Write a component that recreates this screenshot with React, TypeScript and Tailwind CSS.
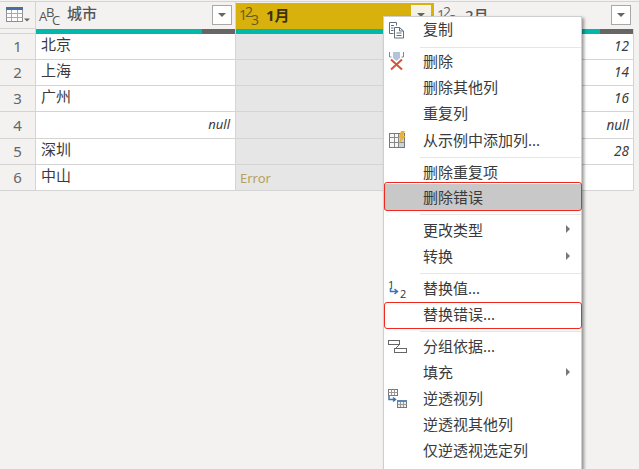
import React from "react";

const rows = [
  { n: 1, city: "北京", feb: "12", h: "h-[26px]" },
  { n: 2, city: "上海", feb: "14", h: "h-[26px]" },
  { n: 3, city: "广州", feb: "16", h: "h-[26px]" },
  { n: 4, city: "", feb: "null", h: "h-[27px]" },
  { n: 5, city: "深圳", feb: "28", h: "h-[26px]" },
  { n: 6, city: "中山", feb: "", h: "h-[26px]" },
];

function Caret() {
  return <span className="w-0 h-0 border-x-[4px] border-x-transparent border-t-[4px] border-t-[#666]" />;
}

function FilterBtn({ on }: { on?: boolean }) {
  return (
    <div className={`w-[20px] h-[20px] flex items-center justify-center border ${on ? "bg-[#f4f1e6] border-[#f4f1e6]" : "bg-white border-[#a8a8a8]"}`}>
      <Caret />
    </div>
  );
}

function TableIcon() {
  return (
    <svg width="32" height="20" viewBox="0 0 32 20">
      <rect x="6.5" y="2.500" width="16" height="14" fill="#fff" stroke="#8a8f96" />
      <rect x="6" y="2" width="17" height="3" fill="#4a6f9e" />
      <path d="M6.500 8.500h16M6.500 12.500h16M11.500 5v11M17.500 5v11" stroke="#a8a8a8" fill="none" />
      <path d="M24 13.500h6l-3 3z" fill="#666" />
    </svg>
  );
}

function AbcIcon() {
  return (
    <span className="relative block w-[20px] h-[20px] text-[#555] text-[13px] leading-none font-['Open_Sans',sans-serif]">
      <span className="absolute left-0 top-[5px]">A</span>
      <span className="absolute left-[7px] top-[1px]">B</span>
      <span className="absolute left-[13px] top-[9px]">C</span>
    </span>
  );
}

function NumIcon({ color }: { color: string }) {
  return (
    <span className={`relative block w-[20px] h-[20px] text-[14px] leading-none font-['Open_Sans',sans-serif] ${color}`}>
      <span className="absolute left-0 top-[3px]">1</span>
      <span className="absolute left-[6px] top-0">2</span>
      <span className="absolute left-[12px] top-[8px]">3</span>
    </span>
  );
}

function Bar({ gray }: { gray?: boolean }) {
  return (
    <div className="flex h-[5px] border-r border-[#d4d4d4]">
      <div className="flex-1 bg-[#01b8aa]" />
      {gray && <div className="w-[33px] bg-[#666]" />}
    </div>
  );
}

function CopyIcon() {
  return (
    <svg width="18" height="18" viewBox="0 0 18 18" fill="none" stroke="#5f6f80">
      <path d="M1.500 1.500h7v3M1.500 1.500v11h4M3 4.500h3M3 7h2.500M3 9.500h2.500" />
      <path d="M6.500 6.500h5l4 3.500v7h-9zM11.500 6.500v3.500h4M8.500 12h5M8.500 14.500h5" fill="#fff" />
    </svg>
  );
}

function DeleteIcon() {
  return (
    <svg width="18" height="20" viewBox="0 0 18 20" className="mt-[2px]">
      <path d="M1.500 0v5h2M15.500 0v5h-2" fill="none" stroke="#808890" />
      <path d="M5 0h7v6l-3.500 3L5 6z" fill="#b4c4d6" />
      <path d="M3 7.500l11 10M14 7.500l-11 10" stroke="#d2553a" strokeWidth="2" fill="none" />
    </svg>
  );
}

function ExampleIcon() {
  return (
    <svg width="18" height="18" viewBox="0 0 18 18">
      <rect x="1.500" y="2.500" width="15" height="14" fill="#f6f6f6" stroke="#777" />
      <rect x="10" y="3" width="6" height="13" fill="#c8d4dc" />
      <path d="M1.500 6.500h15M1.500 11.500h15M6.500 3v13M10.500 3v13" stroke="#888" fill="none" />
      <path d="M13 0h4l-2 5h2.500L11 13l1.500-6H10.500z" fill="#e8b23a" />
    </svg>
  );
}

function ReplaceIcon() {
  return (
    <span className="relative block w-[20px] h-[20px] text-[#333] text-[11px] leading-none font-['Open_Sans',sans-serif]">
      <span className="absolute left-0 top-[1px]">1</span>
      <span className="absolute left-[12px] top-[10px]">2</span>
      <svg className="absolute left-0 top-[10px]" width="12" height="10" viewBox="0 0 12 10" fill="none" stroke="#3f74b0" strokeWidth="1.500">
        <path d="M2.500 0v3.500h7M6.500 1l3 2.500-3 2.500" />
      </svg>
    </span>
  );
}

function GroupIcon() {
  return (
    <svg width="20" height="16" viewBox="0 0 20 16" fill="none" stroke="#666">
      <rect x="0.500" y="2.500" width="11" height="4" />
      <rect x="6.500" y="10.500" width="12" height="4" />
      <path d="M11.500 6.500l-4 4" />
    </svg>
  );
}

function UnpivotIcon() {
  return (
    <svg width="20" height="20" viewBox="0 0 20 20" fill="none">
      <rect x="0.500" y="1.500" width="9" height="6" stroke="#777" />
      <path d="M3.500 1.500v6M6.500 1.500v6M0.500 4.500h9" stroke="#999" />
      <path d="M1 8v3.500h6M5 9.500l2.500 2-2.500 2" stroke="#3f74b0" strokeWidth="1.500" />
      <rect x="9.500" y="12.500" width="9" height="7" fill="#eee" stroke="#777" />
      <rect x="9" y="12" width="10" height="2" fill="#5a87b8" />
      <path d="M12.500 14v5M15.500 14v5M9.500 16.500h9" stroke="#999" />
    </svg>
  );
}

type Item = {
  label: string;
  icon?: React.ReactNode;
  arrow?: boolean;
  hot?: boolean;
  box?: string;
  h?: string;
  tx?: string;
};

type Entry = Item | "s5" | "s6";

const items: Entry[] = [
  { label: "复制", icon: <CopyIcon />, tx: "pb-[2px]" },
  "s5",
  { label: "删除", icon: <DeleteIcon />, tx: "pb-0" },
  { label: "删除其他列", tx: "pb-0" },
  { label: "重复列", tx: "pb-0" },
  { label: "从示例中添加列...", icon: <ExampleIcon />, h: "h-[27px]" },
  "s5",
  { label: "删除重复项" },
  { label: "删除错误", hot: true, box: "top-[-2px] bottom-[-1px]", tx: "pb-0" },
  "s6",
  { label: "更改类型", arrow: true },
  { label: "转换", arrow: true, h: "h-[27px]" },
  "s6",
  { label: "替换值...", icon: <ReplaceIcon />, tx: "pb-0" },
  { label: "替换错误...", box: "top-[1px] bottom-[-2px]", tx: "pb-0" },
  "s6",
  { label: "分组依据...", icon: <GroupIcon />, tx: "pb-0" },
  { label: "填充", arrow: true, tx: "pb-0" },
  { label: "逆透视列", icon: <UnpivotIcon />, tx: "pb-0" },
  { label: "逆透视其他列", tx: "pb-0" },
  { label: "仅逆透视选定列", tx: "pb-0" },
];

export default function App() {
  return (
    <div className="relative w-[639px] h-[469px] overflow-hidden bg-[#f3f2f1] pt-[1px] font-['Noto_Sans','Noto_Sans_CJK_SC',sans-serif] text-[15px] text-[#3a3a3a]">
      {/* table */}
      <div className="grid grid-cols-[36px_200px_198px_200px] border-t border-[#d4d4d4]">
        <div className="h-[27px] border-r border-b border-[#d4d4d4] pt-[3px]">
          <TableIcon />
        </div>
        <div className="h-[27px] flex items-start pt-[3px] pl-[3px] pr-[3px] border-r border-[#d4d4d4]">
          <AbcIcon />
          <span className="flex-1 pl-[8px] text-[#555] font-medium leading-[15px] pt-[1px]">城市</span>
          <FilterBtn />
        </div>
        <div className="h-[27px] pt-[1px]">
          <div className="h-[26px] flex items-start pt-[2px] pl-[3px] pr-[3px] bg-[#d9b10c]">
            <NumIcon color="text-[#6b5a1c]" />
            <span className="flex-1 pl-[7px] font-bold text-[#3a3210] leading-[15px] pt-[3px]">1月</span>
            <FilterBtn on />
          </div>
        </div>
        <div className="h-[27px] flex items-start pt-[3px] pl-[3px] pr-[3px]">
          <NumIcon color="text-[#666]" />
          <span className="flex-1 pl-[8px] text-[#555] font-medium leading-[15px] pt-[3px]">2月</span>
          <FilterBtn />
        </div>

        <div className="h-[5px] border-r border-b border-[#d4d4d4]" />
        <Bar gray />
        <Bar />
        <Bar gray />

        {rows.map((r) => (
          <React.Fragment key={r.n}>
            <div className={`${r.h} border-b border-r border-[#d4d4d4] flex items-center justify-center text-[#666]`}>
              {r.n}
            </div>
            <div className={`${r.h} border-b border-r border-[#d4d4d4] bg-white flex items-center px-[5px] pb-[4px]`}>
              {r.city ? r.city : <span className="ml-auto mt-[4px] italic text-[13px]">null</span>}
            </div>
            <div className={`${r.h} border-b border-r border-[#d4d4d4] bg-[#e6e6e6] flex items-center px-[4px] pt-[2px] text-[13px] text-[#b5a15f]`}>
              {r.n === 6 ? "Error" : ""}
            </div>
            <div className={`${r.h} border-b border-r border-[#d4d4d4] bg-white flex items-center justify-end px-[4px] italic text-[13.5px]`}>
              {r.feb}
            </div>
          </React.Fragment>
        ))}
      </div>

      {/* context menu */}
      <div className="absolute left-[383px] top-[16px] w-[199px] h-[470px] bg-white border border-[#cfcfcf] shadow-[2px_2px_3px_rgba(0,0,0,0.4)]">
        {items.map((it, i) => {
          if (it === "s5" || it === "s6") {
            return (
              <div key={i} className={`${it === "s5" ? "h-[5px] pt-[4px]" : "h-[6px] pt-[4px]"} pl-[36px]`}>
                <div className="w-full h-px bg-[#e6e6e6]" />
              </div>
            );
          }
          return (
            <div key={i} className={`relative ${it.h ?? "h-[26px]"} flex items-center ${it.hot ? "bg-[#c8c8c8]" : ""}`}>
              <div className="w-[39px] flex pl-[4px] shrink-0">{it.icon}</div>
              <span className={`flex-1 ${it.tx ?? "pt-[2px]"}`}>{it.label}</span>
              {it.arrow && (
                <span className="mr-[11px] w-0 h-0 border-y-[4px] border-y-transparent border-l-[4px] border-l-[#777]" />
              )}
              {it.box && (
                <div className={`absolute left-[0px] right-[-1px] ${it.box} border border-[#f02a1e] rounded-[3px]`} />
              )}
            </div>
          );
        })}
      </div>
    </div>
  );
}
